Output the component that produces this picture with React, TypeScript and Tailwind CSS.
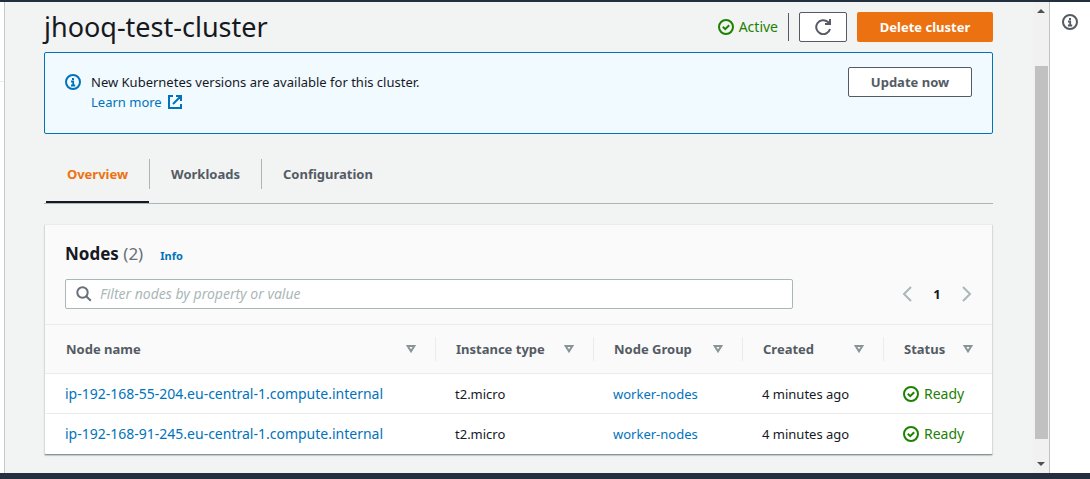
import React from 'react';

const nodes = [
  { name: 'ip-192-168-55-204.eu-central-1.compute.internal', type: 't2.micro', group: 'worker-nodes', created: '4 minutes ago', status: 'Ready' },
  { name: 'ip-192-168-91-245.eu-central-1.compute.internal', type: 't2.micro', group: 'worker-nodes', created: '4 minutes ago', status: 'Ready' },
];

const columns = [
  { label: 'Node name', width: 'w-auto', pad: 'pl-[21px]' },
  { label: 'Instance type', width: 'w-[158px]', pad: 'pl-5' },
  { label: 'Node Group', width: 'w-[149px]', pad: 'pl-5' },
  { label: 'Created', width: 'w-[141px]', pad: 'pl-5' },
  { label: 'Status', width: 'w-[108px]', pad: 'pl-5' },
];

function CheckCircle() {
  return (
    <svg viewBox="0 0 16 16" className="size-4 shrink-0" fill="none" stroke="#1d8102" strokeWidth="2" aria-hidden="true">
      <circle cx="8" cy="8" r="7" />
      <path d="M4.8 7.8l2.4 2.4 4-4" />
    </svg>
  );
}

function InfoCircle() {
  return (
    <svg viewBox="0 0 16 16" className="size-4 shrink-0" fill="none" stroke="currentColor" aria-hidden="true">
      <circle cx="8" cy="8" r="7" strokeWidth="2" />
      <path d="M7 5h2M6 7.5h2.2V11M6 11.5h4.2" strokeWidth="1.8" />
    </svg>
  );
}

function ExternalIcon() {
  return (
    <svg viewBox="0 0 14 14" className="size-3.5" fill="none" stroke="currentColor" strokeWidth="2" aria-hidden="true">
      <path d="M5 1H1v12h12V9M8 1h5v5M13 1L5 9" />
    </svg>
  );
}

function RefreshIcon() {
  return (
    <svg viewBox="0 0 16 16" className="size-4" fill="none" stroke="currentColor" strokeWidth="2" aria-hidden="true">
      <path d="M15 10a7 7 0 1 1-2-7l2 2M15 0v5H10" />
    </svg>
  );
}

function SortIcon() {
  return (
    <svg viewBox="0 0 10 8" className="h-2 w-2.5" fill="none" stroke="#879596" strokeWidth="2" aria-hidden="true">
      <path d="M1.6 1h6.8L5 6.3z" />
    </svg>
  );
}

function Chevron({ d }: { d: string }) {
  return (
    <svg viewBox="0 0 10 16" className="h-4 w-2.5" fill="none" stroke="#aab7b8" strokeWidth="2" aria-hidden="true">
      <path d={d} />
    </svg>
  );
}

function Status({ children }: { children: React.ReactNode }) {
  return (
    <span className="flex items-center gap-[5px] text-sm leading-5 text-[#1d8102]">
      <CheckCircle />
      {children}
    </span>
  );
}

function Header() {
  return (
    <header className="flex items-center justify-between">
      <h1 className="text-[27px] leading-[30px] text-[#16191f]">jhooq-test-cluster</h1>
      <div className="flex h-[30px] items-center">
        <Status>Active</Status>
        <div className="ml-[10px] h-7 w-px bg-[#545b64]" />
        <button type="button" aria-label="Refresh" className="ml-[10px] flex h-[30px] w-12 items-center justify-center rounded-xs border border-[#545b64] bg-white text-[#545b64]">
          <RefreshIcon />
        </button>
        <button type="button" className="ml-[10px] h-[30px] w-[136px] rounded-xs bg-[#ec7211] font-bold text-white">
          Delete cluster
        </button>
      </div>
    </header>
  );
}

function Banner() {
  return (
    <section className="mt-2.5 flex h-[82px] items-start rounded-xs border border-[#0073bb] bg-[#f1faff] px-5 pt-[14px]">
      <span className="mt-[7px] text-[#0073bb]">
        <InfoCircle />
      </span>
      <div className="mt-[5px] ml-[10px] flex-1 leading-5">
        <p>New Kubernetes versions are available for this cluster.</p>
        <a href="#learn" className="inline-flex items-center gap-1.5 text-[#0073bb]">
          Learn more
          <ExternalIcon />
        </a>
      </div>
      <button type="button" className="h-[30px] w-[124px] rounded-xs border border-[#545b64] bg-white font-bold text-[#545b64]">
        Update now
      </button>
    </section>
  );
}

function Tabs() {
  return (
    <div role="tablist" className="mt-[25px] flex h-[45px] items-start border-b border-[#aab7b8] pl-0.5 font-bold text-[#545b64]">
      <button type="button" role="tab" aria-selected="true" className="flex h-11 w-[103px] items-start justify-center border-b-2 border-[#16191f] leading-[30px] text-[#ec7211]">
        Overview
      </button>
      <button type="button" role="tab" aria-selected="false" className="h-[30px] w-[113px] border-x border-[#aab7b8]">
        Workloads
      </button>
      <button type="button" role="tab" aria-selected="false" className="h-[30px] px-[21px]">
        Configuration
      </button>
    </div>
  );
}

function NodesCard() {
  return (
    <section className="mt-5 rounded-xs border border-t-[#eaeded] border-r-[#d5dbdb] border-b-[#879596] border-l-[#d5dbdb] bg-white shadow-[0_1px_1px_rgba(0,28,36,0.2)]">
      <div className="bg-[#fafafa] px-5 pt-[17px] pb-[15px]">
        <div className="flex items-baseline">
          <h2 className="text-[17px] leading-6 font-bold text-[#16191f]">
            Nodes <span className="font-normal text-[#687078]">(2)</span>
          </h2>
          <a href="#info" className="ml-[17px] text-[11px] font-bold text-[#0073bb]">Info</a>
        </div>
        <div className="mt-[13px] flex items-center justify-between gap-5">
          <label className="flex h-[30px] w-full max-w-[728px] items-center rounded-xs border border-[#aab7b8] bg-white pl-[10px]">
            <svg viewBox="0 0 16 16" className="size-4" fill="none" stroke="#687078" strokeWidth="2" aria-hidden="true">
              <circle cx="6.5" cy="6.5" r="5.2" />
              <path d="M10.2 10.2l4.6 4.6" />
            </svg>
            <input
              type="text"
              aria-label="Filter nodes"
              placeholder="Filter nodes by property or value"
              className="ml-2 flex-1 bg-transparent text-sm outline-none placeholder:text-[#aab7b8] placeholder:italic"
            />
          </label>
          <nav aria-label="Pagination" className="flex items-center">
            <button type="button" aria-label="Previous page"><Chevron d="M9 1L2 8l7 7" /></button>
            <button type="button" className="w-[50px] font-bold">1</button>
            <button type="button" aria-label="Next page"><Chevron d="M1 1l7 7-7 7" /></button>
          </nav>
        </div>
      </div>
      <table className="w-full table-fixed border-collapse text-left">
        <thead className="bg-[#fafafa] text-[#545b64]">
          <tr className="h-[49px] border-y border-[#eaeded]">
            {columns.map((c, i) => (
              <th key={c.label} scope="col" className={`${c.width} p-0 font-bold`}>
                <div className={`flex h-6 items-center justify-between pr-[19px] ${c.pad} ${i < columns.length - 1 ? 'border-r border-[#eaeded]' : ''}`}>
                  {c.label}
                  <SortIcon />
                </div>
              </th>
            ))}
          </tr>
        </thead>
        <tbody>
          {nodes.map((n) => (
            <tr key={n.name} className="h-10 border-b border-[#eaeded] last:border-b-0">
              <td className="pl-5 text-sm"><a href="#node" className="text-[#0073bb]">{n.name}</a></td>
              <td className="pl-[19px]">{n.type}</td>
              <td className="pl-[19px]"><a href="#group" className="text-[#0073bb]">{n.group}</a></td>
              <td className="pl-[19px]">{n.created}</td>
              <td className="pl-[19px]"><Status>{n.status}</Status></td>
            </tr>
          ))}
        </tbody>
      </table>
    </section>
  );
}

function Scrollbar() {
  return (
    <div className="flex w-4 shrink-0 flex-col items-center bg-[#f1f1f1]" aria-hidden="true">
      <svg viewBox="0 0 8 4" className="mt-[7px] h-1 w-2" fill="#505050"><path d="M0 4L4 0l4 4z" /></svg>
      <div className="mt-[53px] mr-px w-[13px] flex-1 self-end bg-[#c1c1c1]" />
      <svg viewBox="0 0 8 4" className="mt-[23px] mb-[7px] h-1 w-2" fill="#505050"><path d="M0 0l4 4 4-4z" /></svg>
    </div>
  );
}

export default function App() {
  return (
    <div className="flex h-screen flex-col overflow-hidden bg-[#f2f3f3] font-['Noto_Sans','Open_Sans',sans-serif] text-[13px] leading-5 text-[#16191f]">
      <div className="h-0.5 shrink-0 bg-[#232f3e]" />
      <div className="flex min-h-0 flex-1">
        <aside className="w-[5px] shrink-0 border-r border-[#c5caca] bg-white">
          <div className="h-20 border-b border-[#eaeded]" />
        </aside>
        <main className="min-w-0 flex-1 overflow-hidden pt-[10px] pr-10 pl-[39px]">
          <Header />
          <Banner />
          <Tabs />
          <NodesCard />
        </main>
        <Scrollbar />
        <aside className="w-[41px] shrink-0 border-l border-[#bfc3c3] bg-white pt-3 pl-3">
          <button type="button" aria-label="Open help panel" className="block text-[#545b64]">
            <InfoCircle />
          </button>
        </aside>
      </div>
      <div className="h-1.5 shrink-0 bg-[#232f3e]" />
    </div>
  );
}
